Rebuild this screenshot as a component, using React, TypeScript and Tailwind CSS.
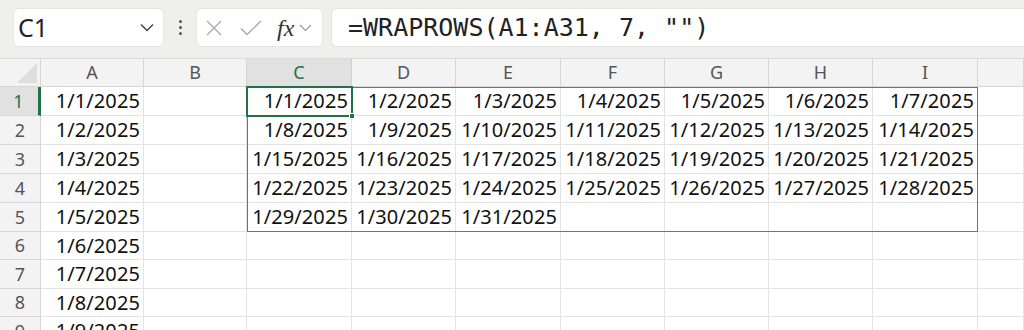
import React from "react";

const COLS = ["A", "B", "C", "D", "E", "F", "G", "H", "I", ""];
const ROW_H = [29, 29, 29, 29, 29, 28, 29, 28, 29];

function dateStr(n: number) {
  return `1/${n}/2025`;
}

// cell values by row (1-based) and column index
function cellValue(r: number, c: number): string {
  if (c === 0) return dateStr(r);
  if (c >= 2 && c <= 8 && r <= 5) {
    const n = (r - 1) * 7 + (c - 2) + 1;
    return n <= 31 ? dateStr(n) : "";
  }
  return "";
}

const cellFont = { fontFamily: '"Noto Sans", "Open Sans", sans-serif' };

export default function App() {
  return (
    <div className="w-[1024px] h-[330px] overflow-hidden bg-white" style={cellFont}>
      {/* formula bar */}
      <div className="flex h-[59px] items-start gap-0 border-b border-[#dadada] bg-[#efefed] pt-2">
        <div className="ml-[13px] flex h-[39px] w-[151px] items-center justify-between rounded-md border border-[#e4e4e2] bg-white pl-[4px] pr-[9px]">
          <span className="text-[25px] leading-none text-[#222]">C1</span>
          <svg width="14" height="9" viewBox="0 0 14 9" fill="none">
            <path d="M1 1.5l6 6 6-6" stroke="#444" strokeWidth="1.4" />
          </svg>
        </div>
        <div className="flex h-[39px] w-[32px] flex-col items-center justify-center gap-[3px]">
          <span className="h-[3px] w-[3px] rounded-full bg-[#555]" />
          <span className="h-[3px] w-[3px] rounded-full bg-[#555]" />
          <span className="h-[3px] w-[3px] rounded-full bg-[#555]" />
        </div>
        <div className="flex h-[39px] w-[127px] items-center rounded-md border border-[#e4e4e2] bg-white pl-[9px]">
          <svg width="16" height="16" viewBox="0 0 16 16" fill="none">
            <path d="M1 1l14 14M15 1L1 15" stroke="#a8a8a8" strokeWidth="1.3" />
          </svg>
          <svg className="ml-[18px]" width="22" height="16" viewBox="0 0 22 16" fill="none">
            <path d="M1 8.5l6 6L21 1" stroke="#a8a8a8" strokeWidth="1.3" />
          </svg>
          <span
            className="ml-[15px] text-[24px] italic leading-none text-[#333]"
            style={{ fontFamily: '"Liberation Serif", serif' }}
          >
            fx
          </span>
          <svg className="ml-[5px]" width="13" height="8" viewBox="0 0 13 8" fill="none">
            <path d="M1 1l5.5 5.5L12 1" stroke="#999" strokeWidth="1.2" />
          </svg>
        </div>
        <div className="ml-[8px] flex h-[39px] flex-1 items-center rounded-l-md border border-r-0 border-[#e4e4e2] bg-white pl-[16px]">
          <span
            className="text-[25px] text-[#222]"
            style={{ fontFamily: '"DejaVu Sans Mono", "Liberation Mono", monospace' }}
          >
            =WRAPROWS(A1:A31, 7, "")
          </span>
        </div>
      </div>

      {/* sheet */}
      <div className="relative">
        <div className="grid grid-cols-[41px_103px_103px_105px_104px_105px_104px_104px_104px_105px_1fr]">
          {/* header row */}
          <div className="relative h-[28px] border-r border-b border-[#d6d6d6] bg-[#f3f3f3]">
            <svg className="absolute right-[3px] bottom-[3px]" width="20" height="20" viewBox="0 0 20 20">
              <path d="M20 0v20H0z" fill="#dedede" />
            </svg>
          </div>
          {COLS.map((c, i) => (
            <div
              key={"h" + i}
              className={
                i === 2
                  ? "flex h-[28px] items-center justify-center border-r border-b border-[#d0d0d0] bg-[#e1e1e1] text-[18px] text-[#217346]"
                  : "flex h-[28px] items-center justify-center border-r border-b border-[#d6d6d6] bg-[#f3f3f3] text-[18px] text-[#555]"
              }
            >
              {c}
            </div>
          ))}

          {ROW_H.map((h, ri) => {
            const r = ri + 1;
            return (
              <React.Fragment key={"r" + r}>
                <div
                  style={{ height: h }}
                  className={
                    r === 1
                      ? "flex items-center justify-center border-r-[3px] border-b border-r-[#217346] border-b-[#d6d6d6] bg-[#e1e1e1] pr-[1px] text-[18px] text-[#217346]"
                      : "flex items-center justify-center border-r border-b border-[#d6d6d6] bg-[#f3f3f3] text-[18px] text-[#555]"
                  }
                >
                  {r}
                </div>
                {COLS.map((_, ci) => (
                  <div
                    key={"c" + r + ci}
                    style={{ height: h }}
                    className="flex items-center justify-end overflow-visible whitespace-nowrap border-r border-b border-[#e3e3e3] pr-[3px] text-[20px] tracking-[0.1px] text-[#111]"
                  >
                    {cellValue(r, ci)}
                  </div>
                ))}
              </React.Fragment>
            );
          })}
        </div>

        {/* spill range outline C1:I5 */}
        <div className="pointer-events-none absolute top-[28px] left-[247px] h-[145px] w-[731px] border border-[#3b78e0]" />
        {/* active cell C1 */}
        <div className="pointer-events-none absolute top-[27px] left-[246px] h-[31px] w-[107px] border-2 border-[#217346]">
          <span className="absolute -right-[4px] -bottom-[4px] h-[6px] w-[6px] border border-white bg-[#217346]" />
        </div>
      </div>
    </div>
  );
}
